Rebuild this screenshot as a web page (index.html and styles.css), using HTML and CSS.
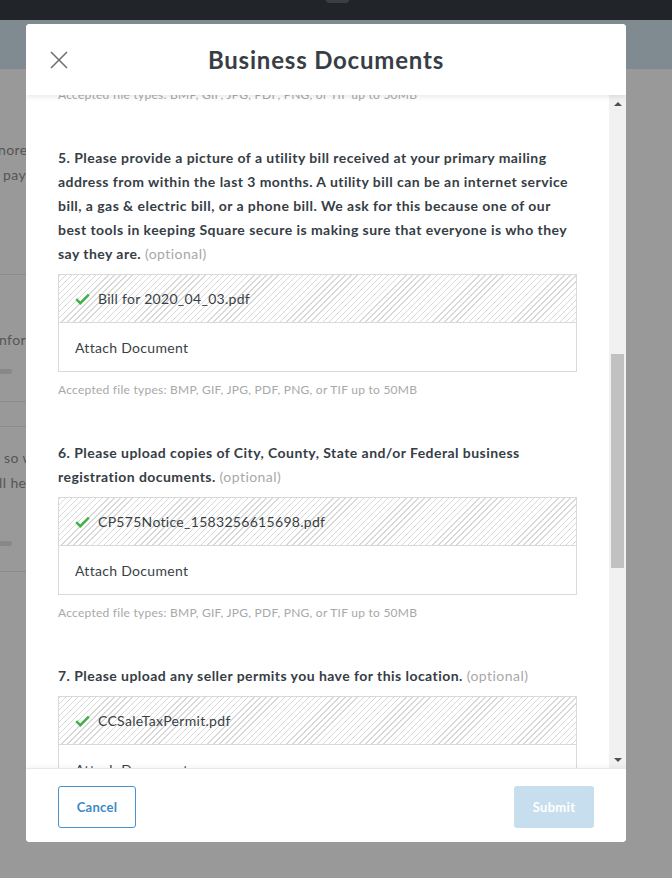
FILE: index.html
```html
<!DOCTYPE html>
<html lang="en">
<head>
<meta charset="utf-8">
<title>Business Documents</title>
<link rel="stylesheet" href="styles.css">
</head>
<body>
<div class="page">
  <div class="topbar"><span class="tab"></span></div>
  <div class="band"></div>
  <div class="behind">
    <p class="bg-text t1">nore</p>
    <p class="bg-text t2">pay</p>
    <div class="bg-rule r1"></div>
    <p class="bg-text t3">nfor</p>
    <div class="bg-pill p1"></div>
    <div class="bg-rule r2"></div>
    <div class="bg-rule r3"></div>
    <p class="bg-text t4">so w</p>
    <p class="bg-text t5">ll he</p>
    <div class="bg-pill p2"></div>
    <div class="bg-rule r4"></div>
  </div>
</div>

<div class="modal">
  <header class="modal-header">
    <button class="close" aria-label="Close">
      <svg width="18" height="18" viewBox="0 0 18 18"><path d="M1 1 L17 17 M17 1 L1 17" stroke="#707070" stroke-width="1.6" fill="none"/></svg>
    </button>
    <h1 class="title">Business Documents</h1>
    <span class="spacer"></span>
  </header>

  <div class="modal-body">
    <div class="viewport">
      <div class="scroll-content">
        <p class="accepted first">Accepted file types: BMP, GIF, JPG, PDF, PNG, or TIF up to 50MB</p>

        <section class="doc">
          <p class="question">5. Please provide a picture of a utility bill received at your primary mailing address from within the last 3 months. A utility bill can be an internet service bill, a gas &amp; electric bill, or a phone bill. We ask for this because one of our best tools in keeping Square secure is making sure that everyone is who they say they are. <span class="opt">(optional)</span></p>
          <div class="filebox">
            <div class="file-row uploaded">
              <svg class="check" width="15" height="12" viewBox="0 0 15 12"><path d="M1.2 6.2 L5.3 10.2 L13.8 1.6" stroke="#3fb13f" stroke-width="2.4" fill="none"/></svg>
              <span>Bill for 2020_04_03.pdf</span>
            </div>
            <div class="file-row attach">Attach Document</div>
          </div>
          <p class="accepted">Accepted file types: BMP, GIF, JPG, PDF, PNG, or TIF up to 50MB</p>
        </section>

        <section class="doc">
          <p class="question">6. Please upload copies of City, County, State and/or Federal business registration documents. <span class="opt">(optional)</span></p>
          <div class="filebox">
            <div class="file-row uploaded">
              <svg class="check" width="15" height="12" viewBox="0 0 15 12"><path d="M1.2 6.2 L5.3 10.2 L13.8 1.6" stroke="#3fb13f" stroke-width="2.4" fill="none"/></svg>
              <span>CP575Notice_1583256615698.pdf</span>
            </div>
            <div class="file-row attach">Attach Document</div>
          </div>
          <p class="accepted">Accepted file types: BMP, GIF, JPG, PDF, PNG, or TIF up to 50MB</p>
        </section>

        <section class="doc">
          <p class="question">7. Please upload any seller permits you have for this location. <span class="opt">(optional)</span></p>
          <div class="filebox">
            <div class="file-row uploaded">
              <svg class="check" width="15" height="12" viewBox="0 0 15 12"><path d="M1.2 6.2 L5.3 10.2 L13.8 1.6" stroke="#3fb13f" stroke-width="2.4" fill="none"/></svg>
              <span>CCSaleTaxPermit.pdf</span>
            </div>
            <div class="file-row attach">Attach Document</div>
          </div>
          <p class="accepted">Accepted file types: BMP, GIF, JPG, PDF, PNG, or TIF up to 50MB</p>
        </section>
      </div>
    </div>
    <div class="scrollbar">
      <div class="arrow up"></div>
      <div class="track"><div class="thumb"></div></div>
      <div class="arrow down"></div>
    </div>
  </div>

  <footer class="modal-footer">
    <button class="btn cancel">Cancel</button>
    <button class="btn submit">Submit</button>
  </footer>
</div>
</body>
</html>
```

FILE: styles.css
```css
* { box-sizing: border-box; }
html, body { margin: 0; padding: 0; }
body {
  width: 672px;
  height: 878px;
  overflow: hidden;
  background: #999999;
  font-family: Lato, "Open Sans", sans-serif;
  position: relative;
}

/* page behind the dim overlay */
.page { display: flex; flex-direction: column; }
.topbar {
  height: 20px;
  background: #212428;
  display: flex;
  justify-content: center;
}
.tab {
  width: 23px;
  height: 3px;
  margin-left: 3px;
  background: #3b3e43;
  border-radius: 0 0 3px 3px;
}
.band { height: 49px; background: #7f8a91; }
.behind { display: flex; flex-direction: column; width: 26px; overflow: hidden; }
.bg-text {
  margin: 0;
  font-size: 14px;
  line-height: 20px;
  letter-spacing: 0.4px;
  color: #555555;
  white-space: nowrap;
}
.t1 { margin-top: 71px; margin-left: -2px; }
.t2 { margin-top: 5px; margin-left: 3px; }
.bg-rule { height: 1px; background: #8b8b8b; width: 26px; }
.r1 { margin-top: 89px; }
.t3 { margin-top: 55px; margin-left: -1px; }
.bg-pill { width: 22px; height: 5px; border-radius: 3px; background: #888888; margin-left: -10px; }
.p1 { margin-top: 19px; }
.r2 { margin-top: 27px; }
.r3 { margin-top: 24px; }
.t4 { margin-top: 21px; margin-left: 4px; }
.t5 { margin-top: 5px; margin-left: -1px; }
.p2 { margin-top: 48px; }
.r4 { margin-top: 25px; }

/* modal */
.modal {
  position: absolute;
  left: 26px;
  top: 24px;
  width: 600px;
  height: 818px;
  background: #fff;
  border-radius: 4px;
  display: flex;
  flex-direction: column;
  overflow: hidden;
}
.modal-header {
  height: 71px;
  flex: none;
  display: grid;
  grid-template-columns: 1fr auto 1fr;
  align-items: center;
  padding: 0 24px;
  box-shadow: 0 2px 5px rgba(0, 0, 0, 0.09);
  position: relative;
  z-index: 2;
  background: #fff;
}
.close {
  border: 0;
  background: none;
  padding: 0;
  width: 18px;
  height: 18px;
  margin-top: 1px;
  display: flex;
}
.title {
  margin: 0;
  font-size: 24px;
  font-weight: 700;
  color: #373e46;
  letter-spacing: 0.8px;
}

.modal-body {
  flex: 1;
  display: flex;
  min-height: 0;
}
.viewport {
  flex: 1;
  overflow: hidden;
  padding: 0 32px;
}
.scroll-content { margin-top: -9px; }

.accepted {
  margin: 9px 0 0;
  font-size: 12px;
  line-height: 18px;
  letter-spacing: 0.25px;
  color: #a8a8a8;
}
.accepted.first { margin-top: 0; }
.doc { margin-top: 42px; }
.question {
  margin: 0;
  font-size: 14px;
  line-height: 24px;
  font-weight: 700;
  letter-spacing: 0.45px;
  color: #363d45;
}
.opt { font-weight: 400; color: #a8a8a8; }

.filebox {
  margin-top: 8px;
  border: 1px solid #d9d9d9;
  display: flex;
  flex-direction: column;
}
.file-row {
  height: 48px;
  display: flex;
  align-items: center;
  padding-left: 16px;
  font-size: 14px;
  letter-spacing: 0.3px;
  color: #3a3f45;
}
.uploaded {
  border-bottom: 1px solid #d9d9d9;
  background: repeating-linear-gradient(135deg, #d9d9d9 0 1px, #ffffff 1px 4.3px);
}
.check { margin-right: 8px; flex: none; }

/* fake classic scrollbar */
.scrollbar {
  width: 17px;
  flex: none;
  background: #f1f1f1;
  display: flex;
  flex-direction: column;
}
.arrow {
  height: 17px;
  flex: none;
  display: flex;
  justify-content: center;
  align-items: center;
}
.arrow::before {
  content: "";
  width: 0;
  height: 0;
  border-left: 4px solid transparent;
  border-right: 4px solid transparent;
}
.arrow.up::before { border-bottom: 4px solid #505050; }
.arrow.down::before { border-top: 4px solid #505050; }
.track { flex: 1; padding: 0 2px; }
.thumb {
  margin-top: 242px;
  height: 214px;
  background: #c1c1c1;
}

.modal-footer {
  height: 74px;
  flex: none;
  display: flex;
  justify-content: space-between;
  align-items: flex-start;
  padding: 17px 32px 0;
  border-top: 1px solid #e8e8e8;
  box-shadow: 0 -2px 4px rgba(0, 0, 0, 0.04);
  position: relative;
  z-index: 2;
  background: #fff;
}
.btn {
  height: 42px;
  border-radius: 3px;
  font-family: Lato, "Open Sans", sans-serif;
  font-size: 13px;
  font-weight: 700;
  letter-spacing: 0.3px;
  padding: 0;
}
.cancel {
  width: 78px;
  background: #fff;
  border: 1px solid #4a92cb;
  color: #3d8ac6;
}
.submit {
  width: 80px;
  background: #c6deee;
  border: 0;
  color: #fff;
}
```
